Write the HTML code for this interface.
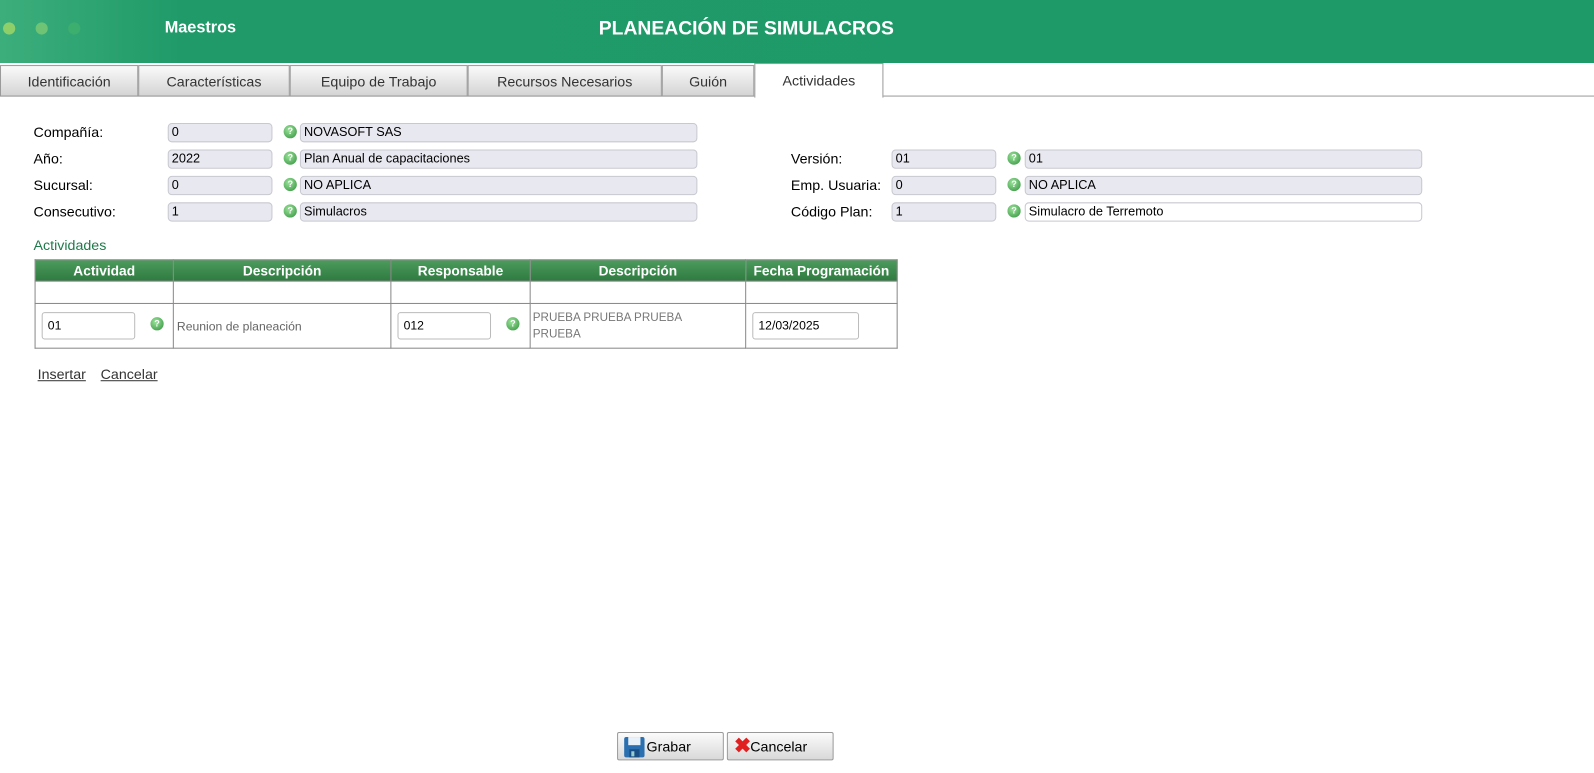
<!DOCTYPE html>
<html><head><meta charset="utf-8"><style>
*{margin:0;padding:0;box-sizing:border-box}
body{width:1594px;height:772px;background:#fff;font-family:"Liberation Sans",sans-serif;position:relative;overflow:hidden;color:#000}
#w{position:absolute;left:0;top:0;width:1568px;height:760px;transform:scale(1.0166);transform-origin:0 0}
.a{position:absolute}
#hdr{left:0;top:0;width:1568px;height:62px;background:linear-gradient(90deg,#3cae7c 0px,#1f9a68 180px,#1e9a68 100%)}
.dot{width:12px;height:12px;border-radius:50%;top:22px}
.tab{top:64px;height:31px;border:1px solid #9a9a9a;background:linear-gradient(#fafafa,#d4d4d4);font-size:14px;color:#333;text-align:center;line-height:30px}
.lbl{font-size:14px}
.in{height:19px;border:1px solid #c8c8d0;border-radius:4px;background:#e8e8f0;font-size:12.5px;line-height:17px;padding-left:3px}
.ic{width:13px;height:13px;border-radius:50%;background:radial-gradient(circle at 40% 35%,#9be39b,#2f8f3a);color:#fff;font-size:9px;font-weight:bold;text-align:center;line-height:13px}
table{border-collapse:collapse;font-size:12px}
td,th{border:1px solid #888}
th{background:linear-gradient(#4c9a5c,#2e7a40);color:#fff;font-size:13.5px;height:21px;font-weight:bold}
.ti{border:1px solid #bbb;border-radius:3px;height:27px;font-size:12px;line-height:25px;padding-left:5px;background:#fff}
.btn{top:720px;height:28px;border:1px solid #999;border-radius:2px;background:linear-gradient(#fbfbfb,#d9d9d9);font-size:14px;line-height:26px}
</style></head><body><div id="w">
<div id="hdr" class="a"></div>
<div class="a dot" style="left:3px;background:#8fcf6a"></div>
<div class="a dot" style="left:35px;background:#6ec374"></div>
<div class="a dot" style="left:67px;background:#3cae6e"></div>
<div class="a" style="left:162px;top:19px;color:#fff;font-weight:bold;font-size:16px">Maestros</div>
<div class="a" style="left:589px;top:18px;color:#fff;font-weight:bold;font-size:19px">PLANEACIÓN DE SIMULACROS</div>
<div class="a" style="left:0;top:94px;width:1568px;height:1px;background:#9a9a9a"></div>
<div class="a tab" style="left:0;width:136px">Identificación</div>
<div class="a tab" style="left:136px;width:149px">Características</div>
<div class="a tab" style="left:285px;width:175px">Equipo de Trabajo</div>
<div class="a tab" style="left:460px;width:191px">Recursos Necesarios</div>
<div class="a tab" style="left:651px;width:91px">Guión</div>
<div class="a tab" style="left:742px;width:127px;top:62px;height:34px;background:#fff;border-bottom:none;line-height:33px">Actividades</div>

<div class="a lbl" style="left:33px;top:122px">Compañía:</div>
<div class="a in" style="left:165px;top:121px;width:103px">0</div>
<div class="a ic" style="left:279px;top:123px">?</div>
<div class="a in" style="left:295px;top:121px;width:391px">NOVASOFT SAS</div>
<div class="a lbl" style="left:33px;top:148px">Año:</div>
<div class="a in" style="left:165px;top:147px;width:103px">2022</div>
<div class="a ic" style="left:279px;top:149px">?</div>
<div class="a in" style="left:295px;top:147px;width:391px">Plan Anual de capacitaciones</div>
<div class="a lbl" style="left:33px;top:174px">Sucursal:</div>
<div class="a in" style="left:165px;top:173px;width:103px">0</div>
<div class="a ic" style="left:279px;top:175px">?</div>
<div class="a in" style="left:295px;top:173px;width:391px">NO APLICA</div>
<div class="a lbl" style="left:33px;top:200px">Consecutivo:</div>
<div class="a in" style="left:165px;top:199px;width:103px">1</div>
<div class="a ic" style="left:279px;top:201px">?</div>
<div class="a in" style="left:295px;top:199px;width:391px">Simulacros</div>

<div class="a lbl" style="left:778px;top:148px">Versión:</div>
<div class="a in" style="left:877px;top:147px;width:103px">01</div>
<div class="a ic" style="left:991px;top:149px">?</div>
<div class="a in" style="left:1008px;top:147px;width:391px">01</div>
<div class="a lbl" style="left:778px;top:174px">Emp. Usuaria:</div>
<div class="a in" style="left:877px;top:173px;width:103px">0</div>
<div class="a ic" style="left:991px;top:175px">?</div>
<div class="a in" style="left:1008px;top:173px;width:391px">NO APLICA</div>
<div class="a lbl" style="left:778px;top:200px">Código Plan:</div>
<div class="a in" style="left:877px;top:199px;width:103px">1</div>
<div class="a ic" style="left:991px;top:201px">?</div>
<div class="a in" style="left:1008px;top:199px;width:391px;background:#fff">Simulacro de Terremoto</div>

<div class="a" style="left:33px;top:233px;color:#1e7a4a;font-size:14px">Actividades</div>
<table class="a" style="left:34px;top:255px;width:849px">
<tr><th style="width:136px">Actividad</th><th style="width:214px">Descripción</th><th style="width:137px">Responsable</th><th style="width:212px">Descripción</th><th>Fecha Programación</th></tr>
<tr style="height:22px"><td></td><td></td><td></td><td></td><td></td></tr>
<tr style="height:44px">
<td style="position:relative"><div class="ti" style="margin-left:6px;width:92px">01</div><div class="ic" style="position:absolute;left:113px;top:13px">?</div></td>
<td style="color:#666;padding-left:3px">Reunion de planeación</td>
<td style="position:relative"><div class="ti" style="margin-left:6px;width:92px">012</div><div class="ic" style="position:absolute;left:113px;top:13px">?</div></td>
<td style="color:#777;font-size:11.5px;padding-left:2px;line-height:16px">PRUEBA PRUEBA PRUEBA<br>PRUEBA</td>
<td><div class="ti" style="margin-left:6px;width:105px">12/03/2025</div></td>
</tr></table>
<div class="a" style="left:37px;top:360px;font-size:14px;text-decoration:underline;color:#333">Insertar</div>
<div class="a" style="left:99px;top:360px;font-size:14px;text-decoration:underline;color:#333">Cancelar</div>

<div class="a btn" style="left:607px;width:105px">
<svg class="a" style="left:5px;top:3px" width="22" height="22" viewBox="0 0 22 22"><rect x="1" y="1" width="20" height="20" rx="2" fill="#2a6fb0"/><rect x="5" y="1" width="12" height="8" fill="#e8f0f8"/><rect x="6" y="13" width="10" height="8" fill="#1a4f86"/><rect x="8" y="15" width="3" height="5" fill="#9cc"/></svg>
<span class="a" style="left:28px">Grabar</span></div>
<div class="a btn" style="left:715px;width:105px">
<span class="a" style="left:6px;color:#e02020;font-weight:bold;font-size:20px;line-height:26px">✖</span>
<span class="a" style="left:22px">Cancelar</span></div>
</div></body></html>
